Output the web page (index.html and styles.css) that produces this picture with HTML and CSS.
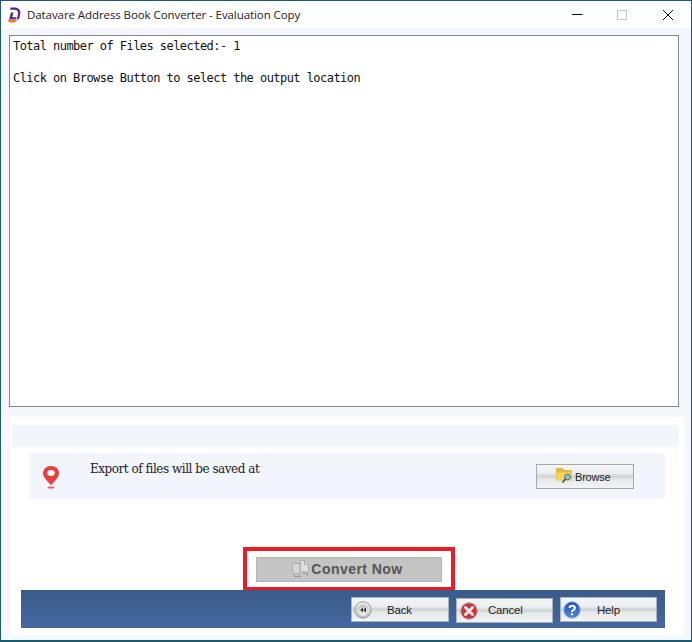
FILE: index.html
```html
<!DOCTYPE html>
<html lang="en">
<head>
<meta charset="utf-8">
<title>Datavare Address Book Converter - Evaluation Copy</title>
<link rel="stylesheet" href="styles.css">
</head>
<body>
<div class="window">
  <header class="titlebar">
    <svg class="logo" viewBox="0 0 14 16" width="14" height="16"><path d="M3.500 0.500H7.500C11.500 0.500 13.800 3 13.300 6.500L12.500 10.500C12.300 11.500 11.800 12.200 11 12.800L9.500 11.500C10 11 10.300 10.500 10.500 9.500L11 6.500C11.300 4.200 10 2.800 7.500 2.800H3Z" fill="#4b2b90"/><path d="M4 5.500H6.500L5.300 10.300H9.500L8.500 12.500H2Z" fill="#4b2b90"/><path d="M0.500 12.500C3.500 13 7 13 11 12.500L8 15.500H3C2 15.500 1 14 0.500 12.500Z" fill="#ee7a22"/></svg>
    <span class="title">Datavare Address Book Converter - Evaluation Copy</span>
    <div class="controls">
      <svg width="12" height="12" viewBox="0 0 12 12"><path d="M0 5.500H10.500" stroke="#111" stroke-width="1"/></svg>
      <svg width="12" height="12" viewBox="0 0 12 12"><rect x="0.500" y="1.500" width="9" height="9" fill="none" stroke="#c4c4c4"/></svg>
      <svg width="12" height="12" viewBox="0 0 12 12"><path d="M1 1 11 11M11 1 1 11" stroke="#111" stroke-width="1" fill="none"/></svg>
    </div>
  </header>
  <main class="body">
    <section class="log">
      <p>Total number of Files selected:- 1</p>
      <p>&nbsp;</p>
      <p>Click on Browse Button to select the output location</p>
    </section>
    <section class="panel">
      <div class="strip"></div>
      <div class="export">
        <svg class="pin" viewBox="0 0 18 24" width="18" height="24"><path d="M9 1C4.500 1 1 4.200 1 8.200 1 12 5.500 16.500 9 20 12.500 16.500 17 12 17 8.200 17 4.200 13.500 1 9 1Z" fill="#ee3b3b"/><ellipse cx="9" cy="8" rx="3.800" ry="3" fill="#fff"/><ellipse cx="9" cy="22.500" rx="3.500" ry="1" fill="#ee5a5a"/></svg>
        <span class="export-text">Export of files will be saved at</span>
        <button class="btn browse" type="button">
          <svg viewBox="0 0 18 16" width="18" height="16"><path d="M0.500 0.500H6.500L8 2.500H15.500V12H0.500Z" fill="#e3bc34" stroke="#c9a227" stroke-width=".6"/><path d="M0.500 4.500H15.500V12.500H0.500Z" fill="#f3d75e"/><circle cx="11.500" cy="9" r="2.800" fill="#8cc6c8" stroke="#4d6f6a"/><path d="M9.500 11 6.500 14.500" stroke="#44555a" stroke-width="1.800"/></svg>
          <span>Browse</span>
        </button>
      </div>
      <div class="convert-wrap">
        <button class="convert" type="button">
          <svg viewBox="0 0 17 18" width="17" height="18"><path d="M0.500 3.500H8V13.500H0.500Z" fill="#d6d6d6" stroke="#adadad"/><path d="M8.500 0.500H13L16.500 4V12H8.500Z" fill="#dedede" stroke="#adadad"/><path d="M12.500 0.500V4.500H16.500" fill="none" stroke="#adadad"/><path d="M2.500 14.500V16.500H8M6.500 15 8.500 16.500 6.500 17.500M11 13.500H15.500V16" fill="none" stroke="#999"/></svg>
          <span>Convert Now</span>
        </button>
      </div>
      <footer class="footer">
        <button class="btn nav back" type="button">
          <svg viewBox="0 0 18 18" width="18" height="18"><defs><linearGradient id="ring" x1="0" y1="0" x2="0" y2="1"><stop offset="0" stop-color="#f4f4f4"/><stop offset="1" stop-color="#b8b8b8"/></linearGradient><linearGradient id="core" x1="0" y1="0" x2="0" y2="1"><stop offset="0" stop-color="#c4c4c4"/><stop offset="1" stop-color="#efefef"/></linearGradient></defs><circle cx="9" cy="9" r="8.200" fill="url(#ring)" stroke="#999"/><circle cx="9" cy="9" r="5.800" fill="url(#core)"/><path d="M9 6.500 6.300 9 9 11.500ZM12 6.500 9.300 9 12 11.500Z" fill="#333"/></svg>
          <span>Back</span>
        </button>
        <button class="btn nav cancel" type="button">
          <svg viewBox="0 0 18 18" width="18" height="18"><circle cx="9" cy="9" r="8.300" fill="#c8363c" stroke="#b9a9a9"/><path d="M5.500 5.500 12.500 12.500M12.500 5.500 5.500 12.500" stroke="#f4e6e6" stroke-width="3" stroke-linecap="round"/></svg>
          <span>Cancel</span>
        </button>
        <button class="btn nav help" type="button">
          <svg viewBox="0 0 18 18" width="18" height="18"><defs><linearGradient id="blue" x1="0" y1="0" x2="0" y2="1"><stop offset="0" stop-color="#1c4fae"/><stop offset="1" stop-color="#4f8ae6"/></linearGradient></defs><circle cx="9" cy="9" r="8.300" fill="url(#blue)" stroke="#9cb6e2"/><path d="M6.500 7C6.500 4 11.900 4 11.900 7 11.900 9 9 8.800 9 11" fill="none" stroke="#fff" stroke-width="2"/><rect x="8" y="12" width="2" height="2.200" fill="#fff"/></svg>
          <span>Help</span>
        </button>
      </footer>
    </section>
  </main>
</div>
</body>
</html>
```
FILE: styles.css
```css
* { box-sizing: border-box; }
html, body { margin: 0; padding: 0; }
body { width: 692px; height: 642px; overflow: hidden; background: #fff; }
.window {
  width: 692px; height: 642px;
  display: flex; flex-direction: column;
  border-style: solid; border-color: #1c5a70;
  border-width: 1px 1px 2px 1px;
  background: #f4f7fc;
}
.titlebar {
  height: 27px; flex: none;
  display: flex; align-items: center;
  background: #fff;
  padding-left: 6px;
}
.logo { flex: none; }
.title {
  margin-left: 6px;
  font: 11.5px "Open Sans", sans-serif;
  letter-spacing: -0.08px;
  color: #222;
}
.controls {
  margin-left: auto;
  display: flex; gap: 33px;
  padding-right: 17px;
}
.body { flex: 1; display: flex; flex-direction: column; padding: 7px 7px 5px 8px; min-height: 0; }
.log {
  height: 372px; width: 670px; flex: none;
  background: #fff;
  border: 1px solid #83888e;
  padding: 2px 3px;
  font: 12px/16px "DejaVu Sans Mono", monospace;
  letter-spacing: -0.55px;
  color: #111;
}
.log p { margin: 0; }
.panel {
  flex: 1;
  margin-top: 10px;
  margin-left: 1px;
  background: #fff;
  padding-top: 8px;
  display: flex; flex-direction: column;
}
.strip { height: 22px; width: 667px; margin-left: 2px; background: #f2f5fb; flex: none; }
.export {
  flex: none;
  height: 46px; width: 636px;
  margin: 6px 0 0 19px;
  background: #f2f5fb;
  display: flex; align-items: center;
}
.pin { margin-left: 13px; flex: none; margin-top: 1px; }
.export-text {
  margin-left: 30px;
  align-self: flex-start;
  margin-top: 9px;
  font: 12px/14px "DejaVu Serif", serif;
  letter-spacing: -0.47px;
  color: #222;
}
.btn {
  display: flex; align-items: center;
  height: 25px; width: 98px;
  padding: 0;
  border: 1px solid #a4a9ad;
  background: linear-gradient(#f3f4f5 0, #eceef0 35%, #cfd3d6 50%, #e6e8ea 62%, #f3f4f5 100%);
  font: 11.5px "Liberation Sans", sans-serif;
  letter-spacing: -0.2px;
  color: #222;
  cursor: pointer;
}
.browse { margin-left: auto; margin-right: 31px; padding-left: 19px; gap: 1px; font-size: 11px; }
.browse span { padding-top: 1px; }
.convert-wrap {
  flex: none;
  width: 212px; height: 43px;
  margin: 48px 0 0 233px;
  border: 4px solid #ec1c24;
  border-bottom-width: 3px;
  background: #fff;
  padding: 6px 9px 0;
}
.convert {
  width: 186px; height: 25px;
  display: flex; align-items: center; justify-content: center; gap: 2px;
  padding: 0 3px 1px 0;
  border: 1px solid #b4b4b4;
  background: #c4c4c4;
  font: bold 14px "Liberation Sans", sans-serif;
  letter-spacing: 0.45px;
  color: #555;
}
.footer {
  flex: none;
  width: 644px; height: 38px;
  margin-left: 11px;
  background: linear-gradient(#3a5b8a, #4469a0);
  display: flex; align-items: flex-start;
  padding: 7px 0 0 330px;
  gap: 7px;
}
.nav { border-color: #aab2c0; padding-left: 2px; }
.back span { margin-left: 15px; }
.cancel { width: 97px; margin-top: 1px; padding-left: 3px; }
.cancel span { margin-left: 10px; padding-bottom: 2px; }
.help { width: 97px; }
.help span { margin-left: 16px; }
```
